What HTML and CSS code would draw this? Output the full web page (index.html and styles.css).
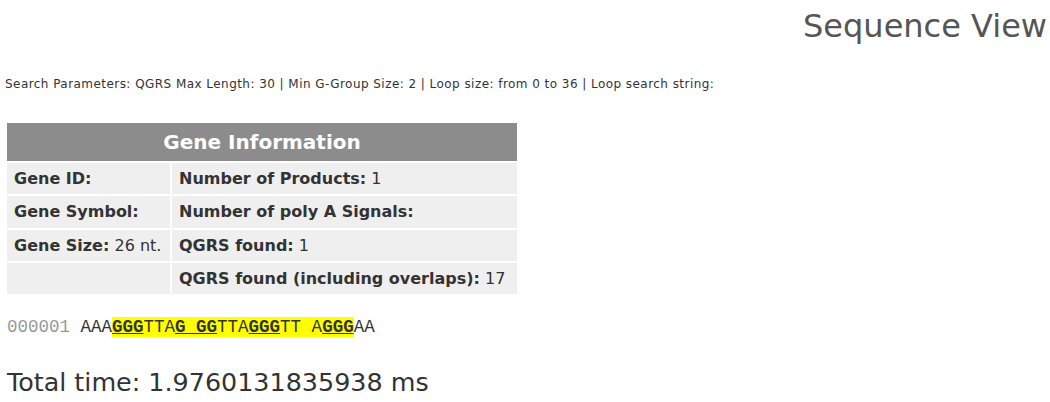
FILE: index.html
```html
<!DOCTYPE html>
<html lang="en">
<head>
  <meta charset="UTF-8">
  <title>Sequence View</title>
  <link rel="stylesheet" href="styles.css">
</head>
<body>

<h1 class="page-title">Sequence View</h1>

<p class="params">Search Parameters: QGRS Max Length: 30 | Min G-Group Size: 2 | Loop size: from 0 to 36 | Loop search string: </p>

<table class="gene-info">
  <tr>
    <th colspan="2">Gene Information</th>
  </tr>
  <tr>
    <td class="col-left"><b>Gene ID:</b></td>
    <td><b>Number of Products:</b> 1</td>
  </tr>
  <tr>
    <td class="col-left"><b>Gene Symbol:</b></td>
    <td><b>Number of poly A Signals:</b></td>
  </tr>
  <tr>
    <td class="col-left"><b>Gene Size:</b> 26 nt.</td>
    <td><b>QGRS found:</b> 1</td>
  </tr>
  <tr>
    <td class="col-left"></td>
    <td><b>QGRS found (including overlaps):</b> 17</td>
  </tr>
</table>

<div class="sequence"><span class="pos">000001</span> AAA<span class="qgrs"><u>GGG</u>TTA<u>G GG</u>TTA<u>GGG</u>TT A<u>GGG</u></span>AA</div>

<p class="total-time">Total time: 1.9760131835938 ms</p>

</body>
</html>
```

FILE: styles.css
```css
body {
  margin: 0;
  padding: 0 3px 0 7px;
  font-family: 'DejaVu Sans', Verdana, sans-serif;
  color: #333;
  background: #fff;
}

.page-title {
  margin: 0;
  padding-top: 8px;
  text-align: right;
  font-size: 32px;
  font-weight: normal;
  color: #555;
  line-height: 36px;
}

.params {
  margin: 33px 0 0 -2px;
  font-size: 12px;
  letter-spacing: 0.45px;
  line-height: 14px;
}

.gene-info {
  margin-top: 32px;
  border-collapse: separate;
  border-spacing: 0;
  width: 510px;
  font-size: 16px;
}

.gene-info th {
  background-color: #8c8c8c;
  color: #fff;
  font-size: 20px;
  height: 38px;
  padding: 0;
  border-bottom: 2px solid #fff;
}

.gene-info td {
  background-color: #efefef;
  height: 31.3px;
  padding: 0 0 0 7px;
  border-bottom: 2px solid #fff;
  white-space: nowrap;
}

.gene-info .col-left {
  width: 156px;
  border-right: 2px solid #fff;
}

.sequence {
  margin-top: 21px;
  font-family: 'Liberation Mono', 'Courier New', monospace;
  font-size: 17.5px;
  line-height: 20px;
  color: #333;
}

.sequence .pos {
  color: #999;
}

.sequence .qgrs {
  background-color: #ffff00;
}

.sequence u {
  font-weight: bold;
}

.total-time {
  margin: 30px 0 0;
  font-size: 25.4px;
  line-height: 30px;
}
```
